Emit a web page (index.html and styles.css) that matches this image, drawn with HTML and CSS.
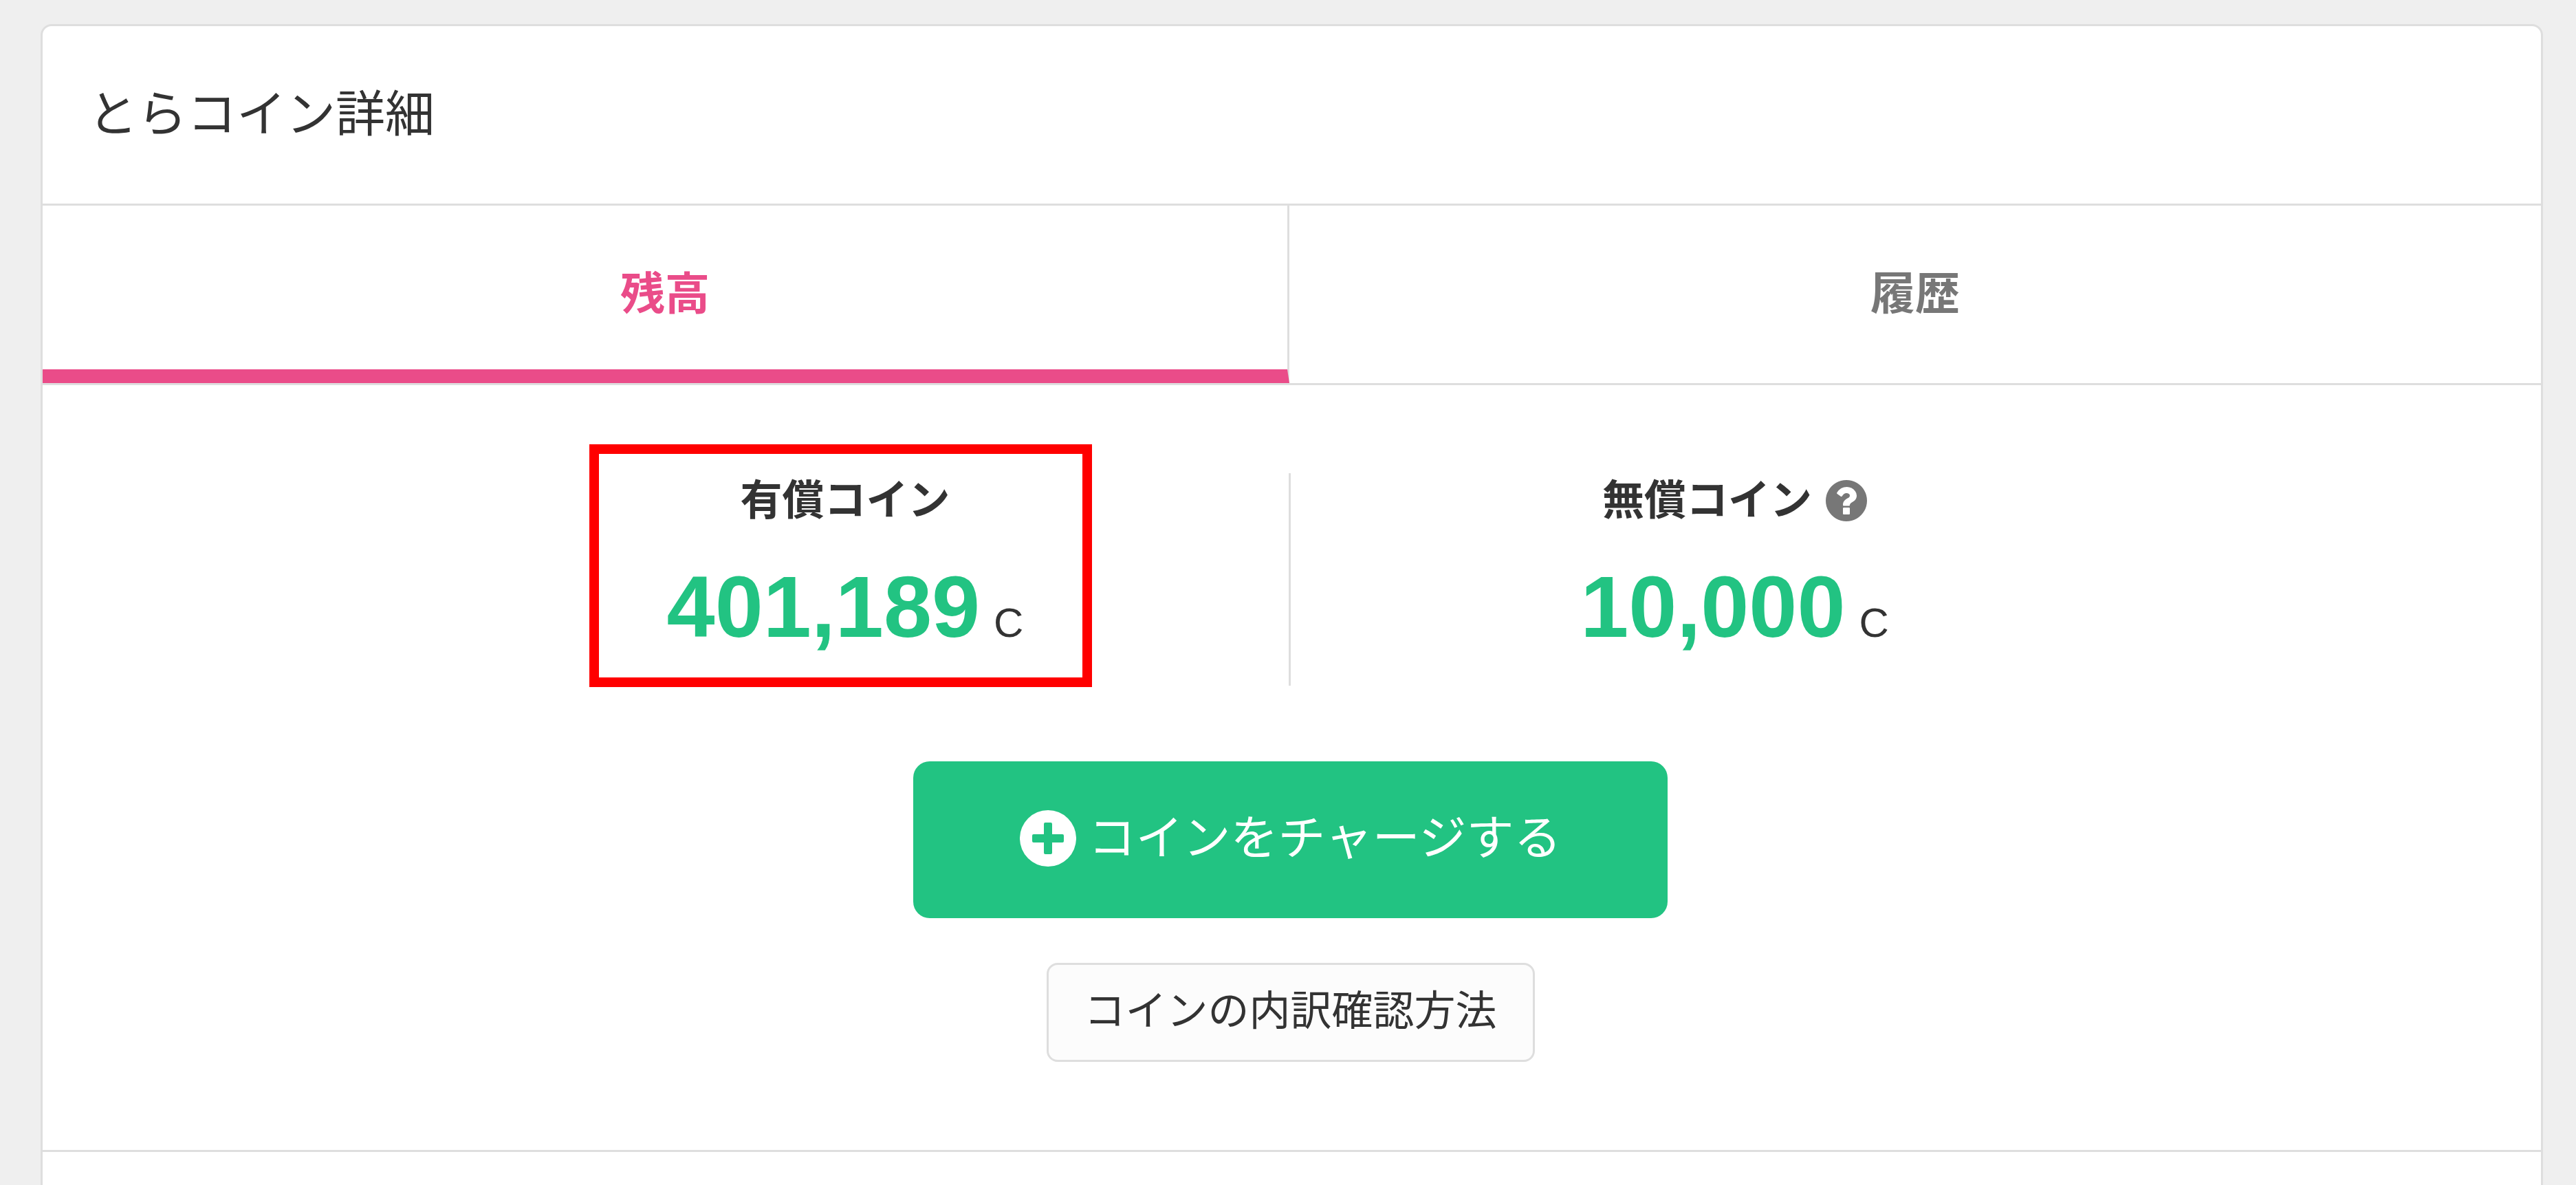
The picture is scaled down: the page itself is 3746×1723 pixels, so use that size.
FILE: index.html
```html
<!DOCTYPE html>
<html lang="ja">
<head>
  <meta charset="UTF-8" />
  <meta name="viewport" content="width=device-width, initial-scale=1.0"/>
  <title>とらコイン詳細</title>
  <link rel="stylesheet" href="styles.css">
</head>
<body>
  <main class="card">
    <header class="card-header">
      <h1>とらコイン詳細</h1>
    </header>

    <nav class="tabs">
      <a href="#balance" class="tab active">残高</a>
      <a href="#history" class="tab">履歴</a>
    </nav>

    <section class="balance" id="balance">
      <div class="coins">
        <div class="coin">
          <h2>有償コイン</h2>
          <p class="amount"><strong>401,189</strong> <span>C</span></p>
          <div class="highlight"></div>
        </div>
        <div class="coin">
          <h2>無償コイン
            <a href="#help" class="help" aria-label="無償コインとは">
              <svg viewBox="128 128 1536 1536"><path d="M1024 1376v-192q0-14-9-23t-23-9h-192q-14 0-23 9t-9 23v192q0 14 9 23t23 9h192q14 0 23-9t9-23zm256-672q0-88-55.500-163t-138.500-116-170-41q-243 0-371 213-15 24 8 42l132 100q7 6 19 6 16 0 25-12 53-68 86-92 34-24 86-24 48 0 85.500 26t37.500 59q0 38-20 61t-68 45q-63 28-115.500 86.500t-52.500 125.500v36q0 14 9 23t23 9h192q14 0 23-9t9-23q0-19 21.500-49.500t54.500-49.500q32-18 49-28.500t46-35 44.500-48 28-60.500 12.500-81zm384 192q0 209-103 385.500t-279.500 279.500-385.500 103-385.500-103-279.500-279.500-103-385.500 103-385.500 279.500-279.500 385.500-103 385.500 103 279.500 279.500 103 385.500z"/></svg>
            </a>
          </h2>
          <p class="amount"><strong>10,000</strong> <span>C</span></p>
        </div>
      </div>

      <button type="button" class="btn-charge">
        <svg viewBox="0 0 82 82"><path fill-rule="evenodd" d="M41 0a41 41 0 1 1 0 82a41 41 0 1 1 0-82zM37 18q-2 0-2 2v15h-15q-2 0-2 2v8q0 2 2 2h15v15q0 2 2 2h8q2 0 2-2v-15h15q2 0 2-2v-8q0-2-2-2h-15v-15q0-2-2-2z"/></svg>
        <span>コインをチャージする</span>
      </button>
      <button type="button" class="btn-detail">コインの内訳確認方法</button>
    </section>

    <section class="next"></section>
  </main>
</body>
</html>
```
FILE: styles.css
```css
* {
  margin: 0;
  padding: 0;
  box-sizing: border-box;
}

body {
  display: flex;
  flex-direction: column;
  min-height: 100vh;
  padding: 35px 48px 0 59px;
  background: #efefef;
  color: #333;
  font-family: "Liberation Sans", "Noto Sans CJK JP", sans-serif;
  font-size: 60px;
}

.card {
  flex: 1;
  display: flex;
  flex-direction: column;
  background: #fff;
  border: 3px solid #dedede;
  border-bottom: none;
  border-radius: 16px 16px 0 0;
}

.card-header {
  padding: 75px 66px 76px;
  border-bottom: 3px solid #dedede;
}

.card-header h1 {
  font-size: 72px;
  font-weight: 400;
  line-height: 107px;
}

/* Tabs */
.tabs {
  display: grid;
  grid-template-columns: 499fr 501fr;
  border-bottom: 3px solid #dedede;
}

.tab {
  height: 258px;
  font-size: 65px;
  font-weight: bold;
  line-height: 258px;
  text-align: center;
  text-decoration: none;
  color: #777;
}

.tab.active {
  color: #ea4c89;
  border-right: 3px solid #dedede;
  border-bottom: 20px solid #ea4c89;
}

/* Balance */
.balance {
  display: flex;
  flex-direction: column;
  align-items: center;
  padding: 128px 4px 128px 0;
}

.coins {
  display: grid;
  grid-template-columns: 1fr 1fr;
  width: 100%;
  max-width: 2584px;
  margin-bottom: 110px;
}

.coin {
  position: relative;
  padding-bottom: 42px;
}

.coin:first-child {
  border-right: 3px solid #dedede;
}

.coin h2 {
  display: flex;
  justify-content: center;
  align-items: center;
  gap: 20px;
  font-size: 61px;
  line-height: 80px;
}

.help {
  display: flex;
}

.help svg {
  width: 60px;
  height: 60px;
  fill: #777;
}

.amount {
  display: flex;
  justify-content: center;
  align-items: baseline;
  gap: 20px;
  margin-top: 43px;
  line-height: 60px;
}

.amount strong {
  font-size: 126px;
  line-height: 144px;
  color: #22c382;
}

/* Frame over the paid coins */
.highlight {
  position: absolute;
  top: -42px;
  bottom: -2px;
  left: 272px;
  right: 286px;
  border: 14px solid #f00;
}

button {
  font-family: inherit;
  font-weight: 400;
  cursor: pointer;
}

.btn-charge {
  display: flex;
  align-items: center;
  gap: 18px;
  height: 228px;
  margin-bottom: 65px;
  padding: 0 155px 4px;
  border: none;
  border-radius: 24px;
  background: #22c382;
  color: #fff;
  font-size: 69px;
}

.btn-charge span {
  padding-bottom: 12px;
}

.btn-charge svg {
  width: 82px;
  height: 82px;
  fill: #fff;
}

.btn-detail {
  height: 144px;
  padding: 0 52px 16px;
  border: 3px solid #dedede;
  border-radius: 16px;
  background: #fcfcfc;
  color: #333;
  font-size: 60px;
}

.next {
  flex: 1;
  border-top: 3px solid #dedede;
}
```
